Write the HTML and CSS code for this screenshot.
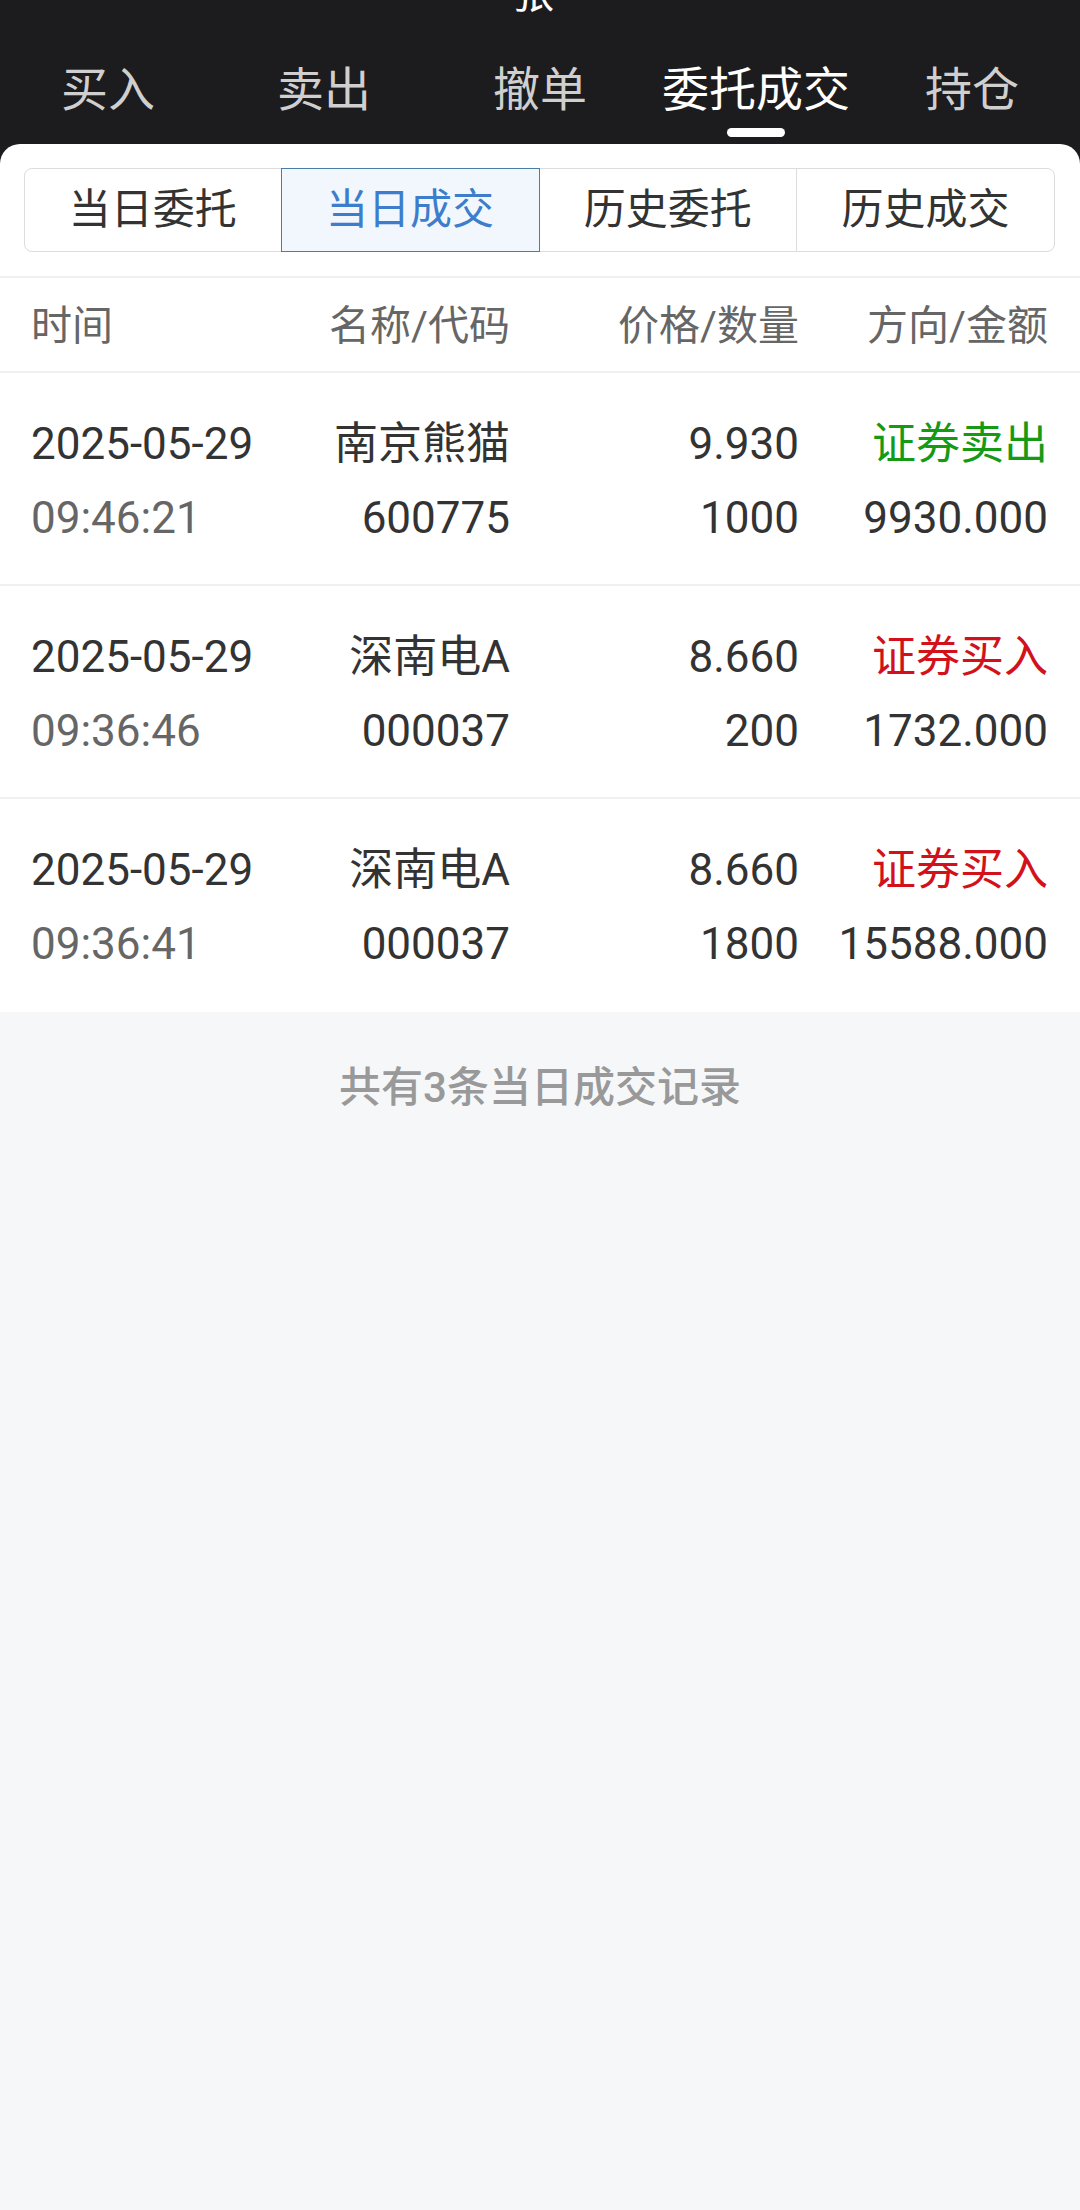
FILE: index.html
```html
<!DOCTYPE html>
<html lang="zh-CN">
<head>
  <meta charset="UTF-8" />
  <title>委托成交</title>
  <link rel="stylesheet" href="styles.css">
</head>
<body>

  <div class="top">
    <div class="title"><span>张</span></div>
    <div class="tabs">
      <div class="tab">买入</div>
      <div class="tab">卖出</div>
      <div class="tab">撤单</div>
      <div class="tab active">委托成交</div>
      <div class="tab">持仓</div>
    </div>
  </div>

  <div class="panel">
    <div class="seg-wrap">
      <div class="seg">
        <div class="seg-item">当日委托</div>
        <div class="seg-item active">当日成交</div>
        <div class="seg-item">历史委托</div>
        <div class="seg-item">历史成交</div>
      </div>
    </div>

    <div class="row head">
      <div>时间</div>
      <div class="r">名称/代码</div>
      <div class="r">价格/数量</div>
      <div class="r">方向/金额</div>
    </div>

    <div class="row">
      <div><div>2025-05-29</div><div class="sub">09:46:21</div></div>
      <div class="r"><div>南京熊猫</div><div>600775</div></div>
      <div class="r"><div>9.930</div><div>1000</div></div>
      <div class="r"><div class="sell">证券卖出</div><div>9930.000</div></div>
    </div>

    <div class="row">
      <div><div>2025-05-29</div><div class="sub">09:36:46</div></div>
      <div class="r"><div>深南电A</div><div>000037</div></div>
      <div class="r"><div>8.660</div><div>200</div></div>
      <div class="r"><div class="buy">证券买入</div><div>1732.000</div></div>
    </div>

    <div class="row last">
      <div><div>2025-05-29</div><div class="sub">09:36:41</div></div>
      <div class="r"><div>深南电A</div><div>000037</div></div>
      <div class="r"><div>8.660</div><div>1800</div></div>
      <div class="r"><div class="buy">证券买入</div><div>15588.000</div></div>
    </div>
  </div>

  <p class="footer">共有3条当日成交记录</p>

</body>
</html>
```

FILE: styles.css
```css
body {
  margin: 0;
  font-family: Roboto, "Noto Sans CJK SC", sans-serif;
  background-color: #f6f7f9;
  color: #333;
}

/* bandeau sombre */
.top {
  background: #1c1c1e;
  padding-bottom: 27px;
}

.title {
  height: 14px;
  overflow: hidden;
  text-align: center;
  color: #fff;
  font-size: 42px;
  padding-right: 14px;
}

.title span {
  display: block;
  line-height: 42px;
  margin-top: -27px;
}

.tabs {
  display: grid;
  grid-template-columns: repeat(5, 1fr);
}

.tab {
  padding-top: 50px;
  font-size: 47px;
  line-height: 52px;
  text-align: center;
  color: #cfcfcf;
}

.tab::after {
  content: "";
  display: block;
  width: 58px;
  height: 9px;
  margin: 12px auto 0;
  border-radius: 5px;
}

.tab.active {
  color: #fff;
}

.tab.active::after {
  background: #fff;
}

/* panneau blanc */
.panel {
  background: #fff;
  margin-top: -20px;
  border-radius: 20px 20px 0 0;
}

.seg-wrap {
  padding: 24px 25px 24px 24px;
  border-bottom: 2px solid #f0f0f0;
}

.seg {
  display: grid;
  grid-template-columns: repeat(4, 1fr);
}

.seg-item {
  border: 1px solid #dcdcdc;
  margin-left: -1px;
  line-height: 82px;
  font-size: 42px;
  text-align: center;
  color: #333;
}

.seg-item:first-child {
  margin-left: 0;
  border-radius: 8px 0 0 8px;
}

.seg-item:last-child {
  border-radius: 0 8px 8px 0;
}

.seg-item.active {
  position: relative;
  border-color: #4a7eaa;
  background: #f1f7fd;
  color: #3d7dcc;
}

.row {
  display: grid;
  grid-template-columns: 200px 279px 289px 249px;
  padding: 34px 32px 29px 31px;
  border-bottom: 2px solid #f0f0f0;
  font-size: 44px;
  line-height: 74px;
  white-space: nowrap;
}

.row.head {
  padding-top: 23px;
  padding-bottom: 20px;
  font-size: 41px;
  line-height: 50px;
  color: #666;
}

.row.last {
  border-bottom: none;
  padding-bottom: 31px;
}

.r {
  text-align: right;
}

.sub {
  color: #666;
}

.sell {
  color: #169a16;
}

.buy {
  color: #d2111a;
}

.footer {
  margin: 0;
  padding-top: 51px;
  text-align: center;
  font-size: 42px;
  line-height: 50px;
  font-weight: 500;
  color: #999;
}
```
